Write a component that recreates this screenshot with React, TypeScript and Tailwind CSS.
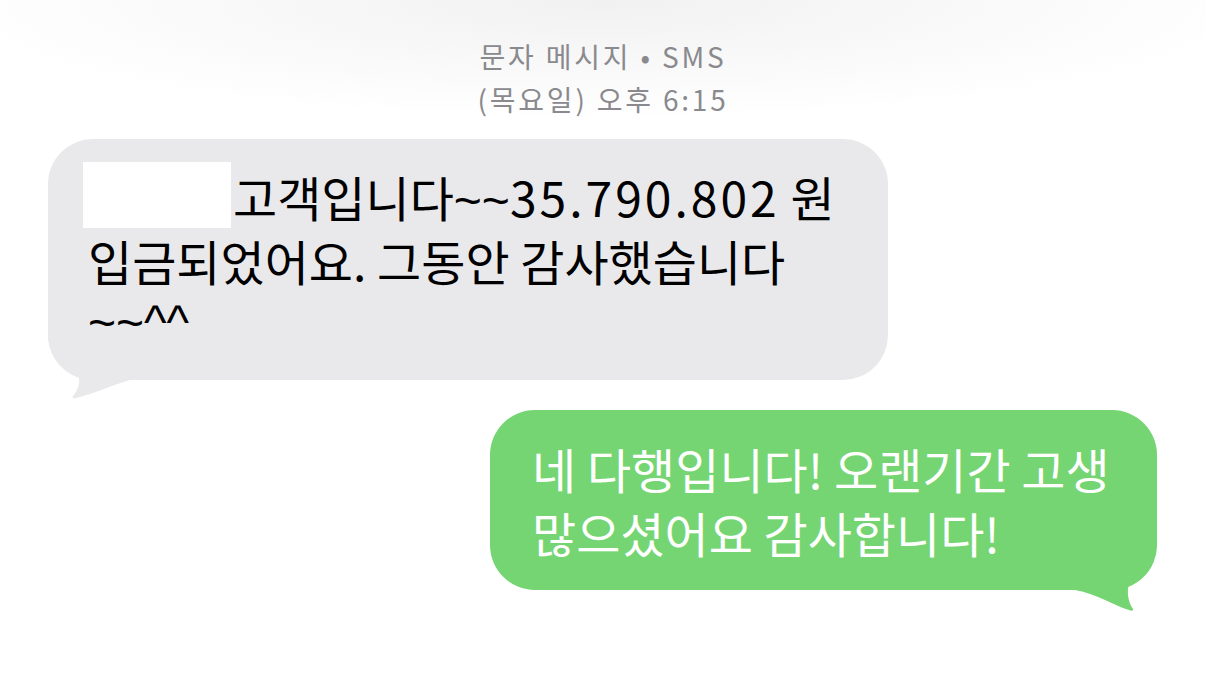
import React from "react";

const font = { fontFamily: '"Noto Sans CJK KR", "Noto Sans", sans-serif' };
const latin = { fontFamily: '"Liberation Sans", sans-serif' };

const GrayTail = () => (
  <svg
    className="absolute left-0 bottom-[-20px]"
    width="82"
    height="70"
    viewBox="0 0 82 70"
  >
    <path
      d="M0,0 L0,8 C2,25 14,36 30,44 C33,52 30,60 25,66 C24,68 26,69 28,68 C45,64 62,56 82,50 L82,0 Z"
      fill="#e9e9eb"
    />
  </svg>
);

const GreenTail = () => (
  <svg
    className="absolute right-0 bottom-[-22px]"
    width="82"
    height="72"
    viewBox="0 0 82 72"
  >
    <path
      d="M0,0 L82,0 L82,5 C80,22 68,36 55,42 C51,50 53,62 58,69 C59,71 56,71 54,70 C40,66 22,54 0,50 Z"
      fill="#75d573"
    />
  </svg>
);

export default function App() {
  return (
    <div className="w-[1206px] h-[692px] bg-white overflow-hidden" style={font}>
      {/* header */}
      <div className="pt-[35px] bg-[radial-gradient(ellipse_55%_120px_at_50%_0%,#f1f1f1,#ffffff)]">
        <div className="text-center text-[28px] leading-[43px] text-[#8a8a8e] tracking-[2.8px]">
          <div>문자 메시지 • SMS</div>
          <div>(목요일) 오후 6:15</div>
        </div>
      </div>

      {/* incoming */}
      <div className="mt-[18px] pl-[48px]">
        <div className="relative w-[840px] rounded-[45px] bg-[#e9e9eb] pl-[40px] pt-[25px] pb-[24px] text-black text-[48px] leading-[64px] whitespace-nowrap">
          <span className="relative z-10">
            <span className="inline-block align-top w-[148px] h-[66px] mt-[-2px] ml-[-5px] mr-[2px] bg-white" />
            고객입니다<span className="leading-[0]" style={latin}>~~</span>
            <span className="tracking-[3px]">35.790.802</span> 원
            <br />
            입금되었어요. 그동안 감사했습니다
            <br />
            <span className="relative top-[-6px] leading-[0]" style={latin}>~~^^</span>
          </span>
          <GrayTail />
        </div>
      </div>

      {/* outgoing */}
      <div className="mt-[30px] flex justify-end pr-[49px]">
        <div className="relative w-[667px] rounded-[45px] bg-[#75d573] pl-[42px] pt-[26px] pb-[26px] text-white text-[48px] leading-[64px] whitespace-nowrap">
          <span className="relative z-10">
            네 다행입니다! 오랜기간 고생
            <br />
            많으셨어요 감사합니다!
          </span>
          <GreenTail />
        </div>
      </div>
    </div>
  );
}
